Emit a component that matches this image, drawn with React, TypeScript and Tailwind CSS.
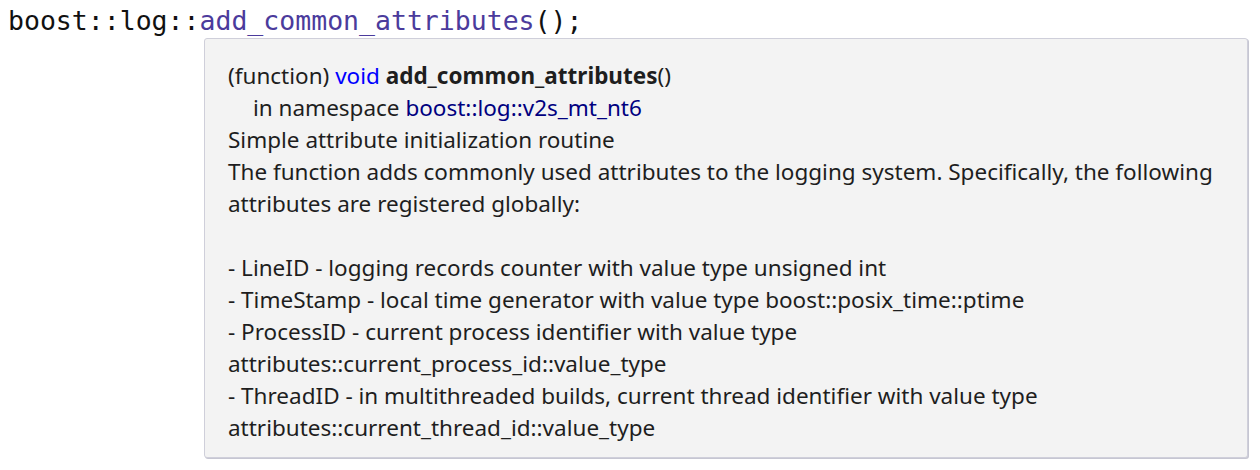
export default function App() {
  return (
    <div className="w-[1260px] h-[470px] bg-white overflow-hidden">
      {/* code line */}
      <div className="pl-[8px] pt-[4px] h-[38px] text-[26.5px] leading-[34px] text-[#111] font-['DejaVu_Sans_Mono',monospace] whitespace-pre">
        <span>boost</span>
        <span>::</span>
        <span>log</span>
        <span>::</span>
        <span className="text-[#4b3b9c]">add_common_attributes</span>
        <span>();</span>
      </div>

      {/* hover tooltip */}
      <div className="ml-[204px] w-[1044px] h-[420px] rounded-[3px] border border-[#cfcfda] bg-[#f3f3f3] shadow-[1px_1px_0_#c6c6d2] pl-[23px] pr-[16px] pt-[21px] text-[22.5px] leading-[32px] text-[#1e1e1e] font-['Noto_Sans',sans-serif]">
        <div>
          (function) <span className="text-[#0000ff]">void</span>{" "}
          <span className="font-bold">add_common_attributes</span>()
        </div>
        <div className="pl-[25px]">
          in namespace <span className="text-[#000080]">boost::log::v2s_mt_nt6</span>
        </div>
        <div>Simple attribute initialization routine</div>
        <div>
          The function adds commonly used attributes to the logging system. Specifically, the following
          attributes are registered globally:
        </div>
        <div className="h-[32px]" />
        <div>- LineID - logging records counter with value type unsigned int</div>
        <div>- TimeStamp - local time generator with value type boost::posix_time::ptime</div>
        <div>- ProcessID - current process identifier with value type</div>
        <div>attributes::current_process_id::value_type</div>
        <div>- ThreadID - in multithreaded builds, current thread identifier with value type</div>
        <div>attributes::current_thread_id::value_type</div>
      </div>
    </div>
  );
}
